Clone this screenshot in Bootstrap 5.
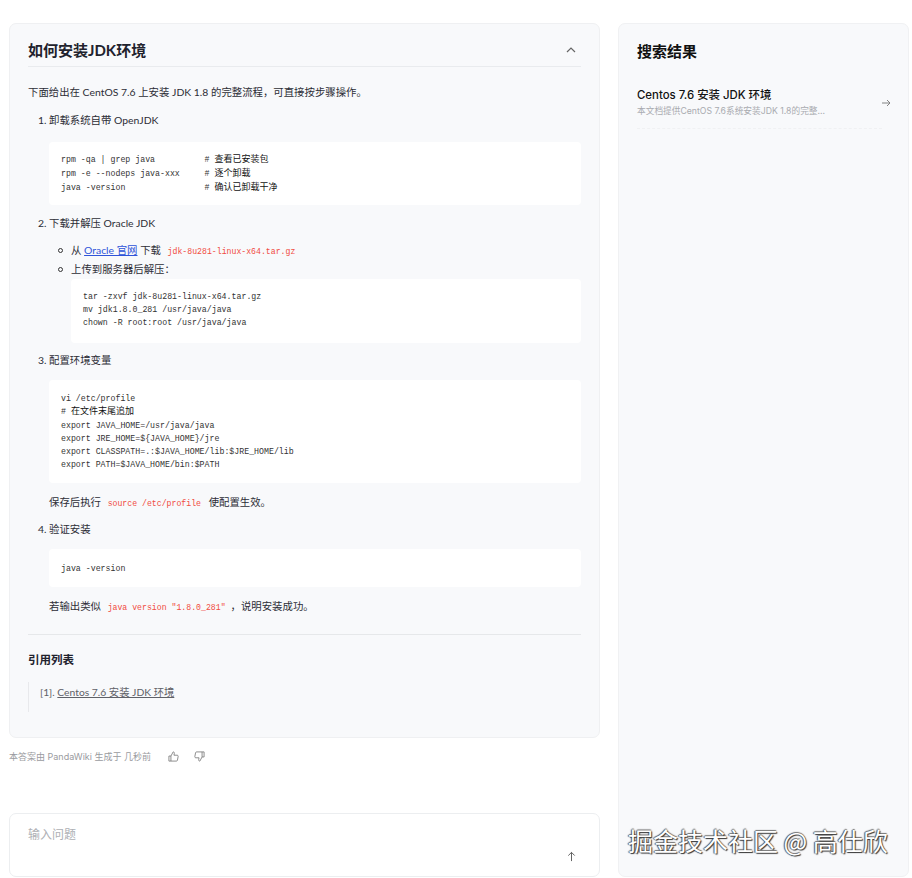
<!doctype html>
<html lang="zh">
<head>
<meta charset="utf-8">
<link href="https://cdn.jsdelivr.net/npm/bootstrap@5.3.0/dist/css/bootstrap.min.css" rel="stylesheet">
<style>
html,body{height:878px;overflow:hidden;background:#fff}
body{font-family:Lato,"Noto Sans CJK SC",sans-serif;font-size:10.4px;color:#2c2d36;line-height:15px}
.shell{height:878px;padding:23px 3px 1px 9px;gap:18px}
.leftcol{width:591px}
.rightcol{width:291px;background:#f8f9fb;border:1px solid #f0f1f3;border-radius:7px;padding:17px 18px}
.answer{height:715px;background:#f8f9fb;border:1px solid #eff0f2;border-radius:7px;padding:0 18px}
.ahead{height:43px;border-bottom:1px solid #e9ebee;padding-top:9px}
.atitle{font-size:15px;font-weight:700;margin:0;color:#21222d;line-height:20px}
.intro{margin:17px 0 0;padding-top:1px}
.steps{list-style:none;margin:0;padding:0 0 0 10px}
.steps>li{position:relative;padding-left:11px}
.num{position:absolute;left:0;top:0}
.steptxt{margin:0}
.s1{margin-top:13px}.s2{margin-top:11px}.s3{margin-top:10px}.s4{margin-top:11px}
.cblock{margin:0;background:#fff;border-radius:4px;font-family:"Liberation Mono","Noto Sans CJK SC",monospace;font-size:8.25px;line-height:13.1px;padding:11px 12px;color:#333;overflow:hidden}
.cmt{font-size:9px;font-weight:400;color:#111}
.cb1{margin-top:14px;height:63px}
.cb2{margin-top:2px;height:64px}
.cb3{margin-top:12px;height:103px;padding-top:12px}
.cb4{margin-top:12px;height:38px;padding-top:13px}
.subl{list-style:none;padding:0 0 0 22px;margin:12px 0 0}
.subl>li{position:relative;margin-bottom:4px}
.subl>li:first-child{margin-bottom:3px}
.subl>li::before{content:"";position:absolute;left:-13px;top:5px;width:5px;height:5px;border:1px solid #333;border-radius:50%}
.inl{font-family:"Liberation Mono",monospace;font-size:8.2px;color:#f14c3f;margin:0 5px 0 4px}
.afterp{margin:12px 0 0}
.olink{color:#2f54d9;text-decoration:underline}
.sep{margin:19px 0 0;border:0;border-top:1px solid #e6e8ea;opacity:1}
.refh{font-size:11.5px;font-weight:700;margin:16px 0 0;line-height:17px;color:#21222d}
.refq{margin:14px 0 0;border-left:1px solid #e8e9ec;padding:3px 0 0 11px;height:30px;color:#5f6168;font-size:10.3px}
.refq a{color:#5f6168;text-decoration:underline}
.meta{font-size:9px;color:#9a9ba0;margin-top:10px;gap:17px;height:16px;font-family:Inter,"Noto Sans CJK SC",sans-serif}
.metaicons{gap:15px}
.inputbox{height:64px;margin-top:auto;background:#fff;border:1px solid #eceef0;border-radius:7px;padding:13px 18px;color:#aeb0b4;font-size:12px;position:relative}
.sendic{position:absolute;right:22px;bottom:14px}
.sh{font-size:15px;font-weight:700;margin:0;line-height:20px;color:#111}
.resitem{margin-top:27px;padding-bottom:11px;border-bottom:1px dashed #f0f1f3;width:245px;font-family:Inter,"Noto Sans CJK SC",sans-serif;position:relative}
.rt{font-size:11.4px;line-height:15px;color:#111;font-weight:500;margin:0}
.rd{font-size:8.7px;line-height:12px;color:#a9abb0;margin:2px 0 0}
.goarrow{position:absolute;right:-9px;top:10px}
.panelwrap{position:relative}
.wmark{position:absolute;left:628px;top:823px;font-family:"Noto Sans CJK SC",sans-serif;font-size:25px;line-height:34px;color:#fff;white-space:nowrap;font-weight:400;text-shadow:1px 1px 1px #333,-1px 0 1px #555,0 -1px 1px #777}
</style>
</head>
<body>
<div class="panelwrap">
<div class="shell d-flex">
  <div class="leftcol d-flex flex-column">
    <section class="answer">
      <div class="ahead d-flex justify-content-between align-items-center">
        <h1 class="atitle">如何安装JDK环境</h1>
        <svg width="12" height="12" viewBox="0 0 12 12" fill="none" stroke="#666" stroke-width="1.2" class="me-1"><path d="M2 8l4-4 4 4"/></svg>
      </div>
      <p class="intro">下面给出在 CentOS 7.6 上安装 JDK 1.8 的完整流程，可直接按步骤操作。</p>
      <ol class="steps">
        <li class="s1"><span class="num">1.</span><p class="steptxt">卸载系统自带 OpenJDK</p>
<pre class="cblock cb1">rpm -qa | grep java          # <span class="cmt">查看已安装包</span>
rpm -e --nodeps java-xxx     # <span class="cmt">逐个卸载</span>
java -version                # <span class="cmt">确认已卸载干净</span></pre></li>
        <li class="s2"><span class="num">2.</span><p class="steptxt">下载并解压 Oracle JDK</p>
          <ul class="subl">
            <li>从 <a class="olink" href="#">Oracle 官网</a> 下载 <code class="inl">jdk-8u281-linux-x64.tar.gz</code></li>
            <li>上传到服务器后解压：
<pre class="cblock cb2">tar -zxvf jdk-8u281-linux-x64.tar.gz
mv jdk1.8.0_281 /usr/java/java
chown -R root:root /usr/java/java</pre></li>
          </ul></li>
        <li class="s3"><span class="num">3.</span><p class="steptxt">配置环境变量</p>
<pre class="cblock cb3">vi /etc/profile
# <span class="cmt">在文件末尾追加</span>
export JAVA_HOME=/usr/java/java
export JRE_HOME=${JAVA_HOME}/jre
export CLASSPATH=.:$JAVA_HOME/lib:$JRE_HOME/lib
export PATH=$JAVA_HOME/bin:$PATH</pre>
          <p class="afterp">保存后执行 <code class="inl">source /etc/profile</code> 使配置生效。</p></li>
        <li class="s4"><span class="num">4.</span><p class="steptxt">验证安装</p>
<pre class="cblock cb4">java -version</pre>
          <p class="afterp">若输出类似 <code class="inl">java version "1.8.0_281"</code>，说明安装成功。</p></li>
      </ol>
      <hr class="sep">
      <h2 class="refh">引用列表</h2>
      <div class="refq">[1]. <a href="#">Centos 7.6 安装 JDK 环境</a></div>
    </section>
    <div class="meta d-flex align-items-center">
      <span>本答案由 PandaWiki 生成于 几秒前</span>
      <span class="metaicons d-flex">
        <svg width="11" height="11" viewBox="0 0 12 12" fill="none" stroke="#777" stroke-width=".9"><path d="M1 5.5h2.2v5.5H1zM3.2 5.5L5.6 1c1 0 1.5.7 1.3 1.6L6.5 4.6h3.6c.7 0 1.1.6 1 1.2l-.8 4.2c-.1.6-.5 1-1.1 1H3.2"/></svg>
        <svg width="11" height="11" viewBox="0 0 12 12" fill="none" stroke="#777" stroke-width=".9"><path d="M11 6.5H8.8V1H11zM8.8 6.5L6.4 11c-1 0-1.5-.7-1.3-1.6l.4-2H1.9c-.7 0-1.1-.6-1-1.2l.8-4.2c.1-.6.5-1 1.1-1h6"/></svg>
      </span>
    </div>
    <div class="inputbox">输入问题
      <svg class="sendic" width="11" height="11" viewBox="0 0 12 12" fill="none" stroke="#555" stroke-width="1"><path d="M6 11V1.5M2.5 5L6 1.5 9.5 5"/></svg>
    </div>
  </div>
  <aside class="rightcol">
    <h2 class="sh">搜索结果</h2>
    <div class="resitem">
      <p class="rt">Centos 7.6 安装 JDK 环境</p>
      <p class="rd">本文档提供CentOS 7.6系统安装JDK 1.8的完整...</p>
      <svg class="goarrow" width="10" height="10" viewBox="0 0 10 10" fill="none" stroke="#777" stroke-width=".9"><path d="M1 5h8M6 2l3 3-3 3"/></svg>
    </div>
  </aside>
</div>
<div class="wmark">掘金技术社区 @ 高仕欣</div>
</div>
</body>
</html>
